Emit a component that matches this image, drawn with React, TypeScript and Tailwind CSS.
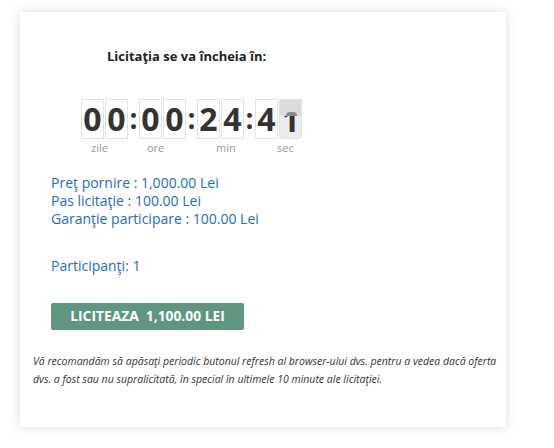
import React from "react";

const Box = ({ d }: { d: string }) => (
  <div className="w-[23px] h-[40px] border border-[#e2e2e2] bg-white flex items-center justify-center text-[32px] font-bold text-[#333] leading-none">
    {d}
  </div>
);

const FlipBox = () => (
  <div className="relative w-[23px] h-[40px] border border-[#e2e2e2] bg-[#ececec] rounded-b-[4px] flex items-center justify-center text-[32px] font-bold text-[#333] leading-none">
    <span className="mt-[2px]">1</span>
    <div className="absolute left-0 top-0 w-full h-[16px] bg-[#dcdcdc]" />
    <div className="absolute left-[6px] top-[12px] w-[11px] h-[4px] rounded-t-full bg-[#8a8a8a]" />
  </div>
);

const Colon = () => (
  <div className="w-[11px] h-[40px] flex items-center justify-center text-[28px] font-bold text-[#333] leading-none pb-[3px]">
    :
  </div>
);

export default function App() {
  return (
    <div className="w-[554px] h-[448px] bg-white" style={{ fontFamily: '"Open Sans", "Liberation Sans", sans-serif' }}>
      <div className="pt-[12px] pl-[20px]">
        <div className="w-[486px] h-[415px] bg-white shadow-[0_0_10px_rgba(0,0,0,0.14)] flex flex-col">
          <div className="mt-[35px] pl-[87px] text-[13px] leading-[18px] font-bold text-[#222]">
            Licitaţia se va încheia în:
          </div>
          <div className="mt-[34px] pl-[61px] flex">
            <div className="flex flex-col">
              <div className="flex gap-[1px]"><Box d="0" /><Box d="0" /></div>
              <div className="mt-[2px] ml-[10px] text-[11px] leading-[14px] text-[#9a9a9a]">zile</div>
            </div>
            <Colon />
            <div className="flex flex-col">
              <div className="flex gap-[1px]"><Box d="0" /><Box d="0" /></div>
              <div className="mt-[2px] ml-[8px] text-[11px] leading-[14px] text-[#9a9a9a]">ore</div>
            </div>
            <Colon />
            <div className="flex flex-col">
              <div className="flex gap-[1px]"><Box d="2" /><Box d="4" /></div>
              <div className="mt-[2px] ml-[19px] text-[11px] leading-[14px] text-[#9a9a9a]">min</div>
            </div>
            <Colon />
            <div className="flex flex-col">
              <div className="flex gap-[1px]"><Box d="4" /><FlipBox /></div>
              <div className="mt-[2px] ml-[22px] text-[11px] leading-[14px] text-[#9a9a9a]">sec</div>
            </div>
          </div>
          <div className="mt-[19px] pl-[31px] text-[14px] leading-[18px] text-[#1c6dbf]">
            <div>Preţ pornire : 1,000.00 Lei</div>
            <div>Pas licitaţie : 100.00 Lei</div>
            <div>Garanţie participare : 100.00 Lei</div>
            <div className="mt-[29px]">Participanţi: 1</div>
          </div>
          <div className="mt-[28px] pl-[31px]">
            <button className="w-[193px] h-[27px] bg-[#5e9680] rounded-[2px] text-white text-[13.8px] font-bold flex items-center justify-center whitespace-pre">
              LICITEAZA  1,100.00 LEI
            </button>
          </div>
          <div className="mt-[22px] pl-[13px] pr-[4px] text-[10.5px] leading-[18px] italic text-[#333]">
            Vă recomandăm să apăsaţi periodic butonul refresh al browser-ului dvs. pentru a vedea dacă oferta dvs. a fost sau nu supralicitată, în special în ultimele 10 minute ale licitaţiei.
          </div>
        </div>
      </div>
    </div>
  );
}
